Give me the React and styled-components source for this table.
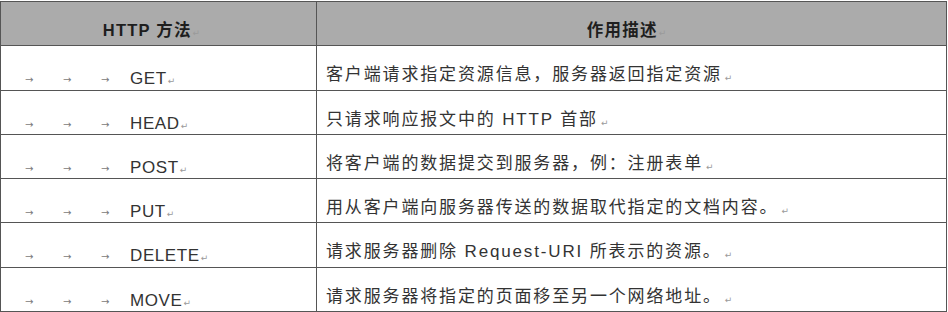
import styled, { createGlobalStyle } from 'styled-components'

const GlobalStyle = createGlobalStyle`
  html, body {
    margin: 0;
    padding: 0;
    background: #fff;
  }
  body {
    font-family: 'Liberation Sans', 'Noto Sans CJK SC', Arial, sans-serif;
    color: #2e2e2e;
  }
`

const methods = [
  { name: 'GET', desc: '客户端请求指定资源信息，服务器返回指定资源' },
  { name: 'HEAD', desc: '只请求响应报文中的 HTTP 首部' },
  { name: 'POST', desc: '将客户端的数据提交到服务器，例：注册表单' },
  { name: 'PUT', desc: '用从客户端向服务器传送的数据取代指定的文档内容。' },
  { name: 'DELETE', desc: '请求服务器删除 Request-URI 所表示的资源。' },
  { name: 'MOVE', desc: '请求服务器将指定的页面移至另一个网络地址。' }
]

const Page = styled.div`
  padding-top: 1px;
`

const Grid = styled.div`
  display: grid;
  grid-template-columns: 316px 630px;
  grid-auto-rows: 44.3px;
  width: 947px;
  border-top: 1.5px solid #555;
  border-left: 1.5px solid #555;
  box-sizing: border-box;
`

const Cell = styled.div`
  box-sizing: border-box;
  border-right: 1.5px solid #555;
  border-bottom: 1.5px solid #555;
  display: flex;
  align-items: flex-start;
  padding-top: ${(p) => p.$top || 19}px;
  padding-left: ${(p) => p.$left || 0}px;
  line-height: 20px;
  white-space: nowrap;
  overflow: hidden;
`

const HeadCell = styled(Cell)`
  background: #ababab;
  justify-content: center;
  font-weight: bold;
  font-size: 16.5px;
  letter-spacing: 1.2px;
  color: #1e1e1e;
  padding-top: 18px;
  padding-right: ${(p) => p.$shift || 0}px;
`

const Tabs = styled.span`
  display: flex;
  gap: 28px;
  margin-right: 19px;
`

const Arrow = styled.span`
  font-family: 'DejaVu Sans', sans-serif;
  font-size: 10px;
  color: #7a7a7a;
  width: 10px;
  line-height: 20px;
  padding-top: 2px;
`

const Method = styled.span`
  font-size: 17px;
  letter-spacing: 0.6px;
  color: #333;
  padding-top: 1px;
`

const Desc = styled.span`
  font-size: 17px;
  letter-spacing: 1.85px;
  color: #333;
`

const Mark = styled.span`
  font-family: 'DejaVu Sans', sans-serif;
  font-size: 9px;
  font-weight: normal;
  color: #9a9a9a;
  margin-left: ${(p) => p.$gap || 1}px;
  padding-top: 3px;
  letter-spacing: 0;
`

const App = () => (
  <Page>
    <GlobalStyle />
    <Grid>
      <HeadCell $shift={14}>
        HTTP 方法<Mark>↵</Mark>
      </HeadCell>
      <HeadCell $shift={10}>
        作用描述<Mark>↵</Mark>
      </HeadCell>
      {methods.map((m) => [
        <Cell key={m.name + '-m'} $left={24} $top={22}>
          <Tabs>
            <Arrow>→</Arrow>
            <Arrow>→</Arrow>
            <Arrow>→</Arrow>
          </Tabs>
          <Method>{m.name}</Method>
          <Mark>↵</Mark>
        </Cell>,
        <Cell key={m.name + '-d'} $left={9} $top={19}>
          <Desc>{m.desc}</Desc>
          <Mark $gap={3}>↵</Mark>
        </Cell>
      ])}
    </Grid>
  </Page>
)

export default App
